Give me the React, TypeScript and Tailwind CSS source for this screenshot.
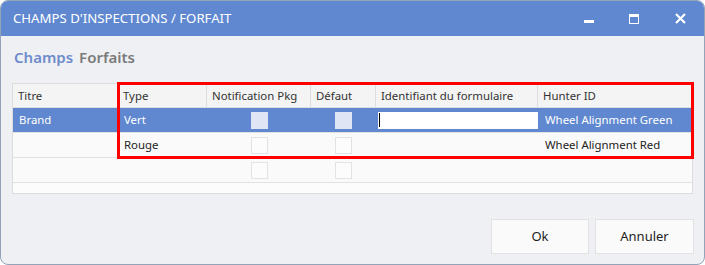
import React from "react";

const cols = [
  { label: "Titre", w: 105 },
  { label: "Type", w: 89 },
  { label: "Notification Pkg", w: 104 },
  { label: "Défaut", w: 65 },
  { label: "Identifiant du formulaire", w: 162 },
  { label: "Hunter ID", w: 154 },
];

function Check({ sel }: { sel?: boolean }) {
  return (
    <div
      className={
        sel
          ? "w-[17px] h-[17px] bg-[#dfe5f4]"
          : "w-[17px] h-[17px] border border-[#e3e3e3] bg-[#fcfcfc]"
      }
    />
  );
}

export default function App() {
  const font = { fontFamily: '"Noto Sans", "Open Sans", sans-serif' };
  return (
    <div className="w-[705px] h-[265px] bg-white" style={font}>
      <div className="relative w-[705px] h-[265px] rounded-[8px] border border-[#93a4b8] bg-[#eff0f4] overflow-hidden flex flex-col">
        <div className="h-[35px] bg-[#5f88d0] flex items-center pl-[12px] text-white text-[13.2px] shrink-0">
          <span className="flex-1">CHAMPS D'INSPECTIONS / FORFAIT</span>
          <div className="w-[10px] h-[3px] bg-white mt-[6px] mr-[35px]" />
          <div className="w-[10px] h-[10px] border border-white border-t-[3px] mr-[36px]" />
          <svg width="11" height="11" viewBox="0 0 11 11" className="mr-[18px]">
            <path d="M1 1 L10 10 M10 1 L1 10" stroke="white" strokeWidth="2.2" />
          </svg>
        </div>
        <div className="flex gap-[6px] pl-[13px] pt-[11px] text-[15px] font-semibold leading-[20px]">
          <span className="text-[#6e8ccb]">Champs</span>
          <span className="text-[#7b7b7b]">Forfaits</span>
        </div>
        <div className="ml-[11px] mt-[16px] w-[681px] border border-[#dcdcdc] bg-[#fafafa] text-[11.4px] text-[#222]">
          <div className="flex h-[24px] bg-[#f4f4f4] border-b border-[#dddddd]">
            {cols.map((c, i) => (
              <div
                key={c.label}
                style={{ width: c.w }}
                className={
                  "flex items-center pl-[5px] text-[#333] " +
                  (i < cols.length - 1 ? "border-r border-[#dddddd]" : "")
                }
              >
                {c.label}
              </div>
            ))}
          </div>
          <div className="flex h-[25px] bg-[#5f88d0] text-white border-b border-[#e2e2e2]">
            <div style={{ width: 105 }} className="flex items-center pl-[6px]">Brand</div>
            <div style={{ width: 89 }} className="flex items-center pl-[6px]">Vert</div>
            <div style={{ width: 104 }} className="flex items-center justify-center"><Check sel /></div>
            <div style={{ width: 65 }} className="flex items-center justify-center"><Check sel /></div>
            <div style={{ width: 162 }} className="flex items-center pl-[2px]">
              <div className="w-[160px] h-[17px] bg-white flex items-center pl-[1px]">
                <div className="w-[1px] h-[14px] bg-black" />
              </div>
            </div>
            <div style={{ width: 154 }} className="flex items-center pl-[7px]">Wheel Alignment Green</div>
          </div>
          <div className="flex h-[25px] border-b border-[#e2e2e2]">
            <div style={{ width: 105 }} />
            <div style={{ width: 89 }} className="flex items-center pl-[6px]">Rouge</div>
            <div style={{ width: 104 }} className="flex items-center justify-center"><Check /></div>
            <div style={{ width: 65 }} className="flex items-center justify-center"><Check /></div>
            <div style={{ width: 162 }} />
            <div style={{ width: 154 }} className="flex items-center pl-[7px]">Wheel Alignment Red</div>
          </div>
          <div className="flex h-[25px] border-b border-[#e2e2e2]">
            <div style={{ width: 105 }} />
            <div style={{ width: 89 }} />
            <div style={{ width: 104 }} className="flex items-center justify-center"><Check /></div>
            <div style={{ width: 65 }} className="flex items-center justify-center"><Check /></div>
          </div>
          <div className="h-[10px] bg-[#fcfcfc]" />
        </div>
        <div className="flex justify-end gap-[6px] pr-[10px] mt-[25px] text-[13px] text-[#222]">
          <div className="w-[98px] h-[35px] bg-[#fafafa] border border-[#e2e2e2] flex items-center justify-center">Ok</div>
          <div className="w-[99px] h-[35px] bg-[#fafafa] border border-[#e2e2e2] flex items-center justify-center">Annuler</div>
        </div>
        <div className="absolute left-[116px] top-[81px] w-[577px] h-[77px] border-[3px] border-[#ff0000] pointer-events-none" />
      </div>
    </div>
  );
}
